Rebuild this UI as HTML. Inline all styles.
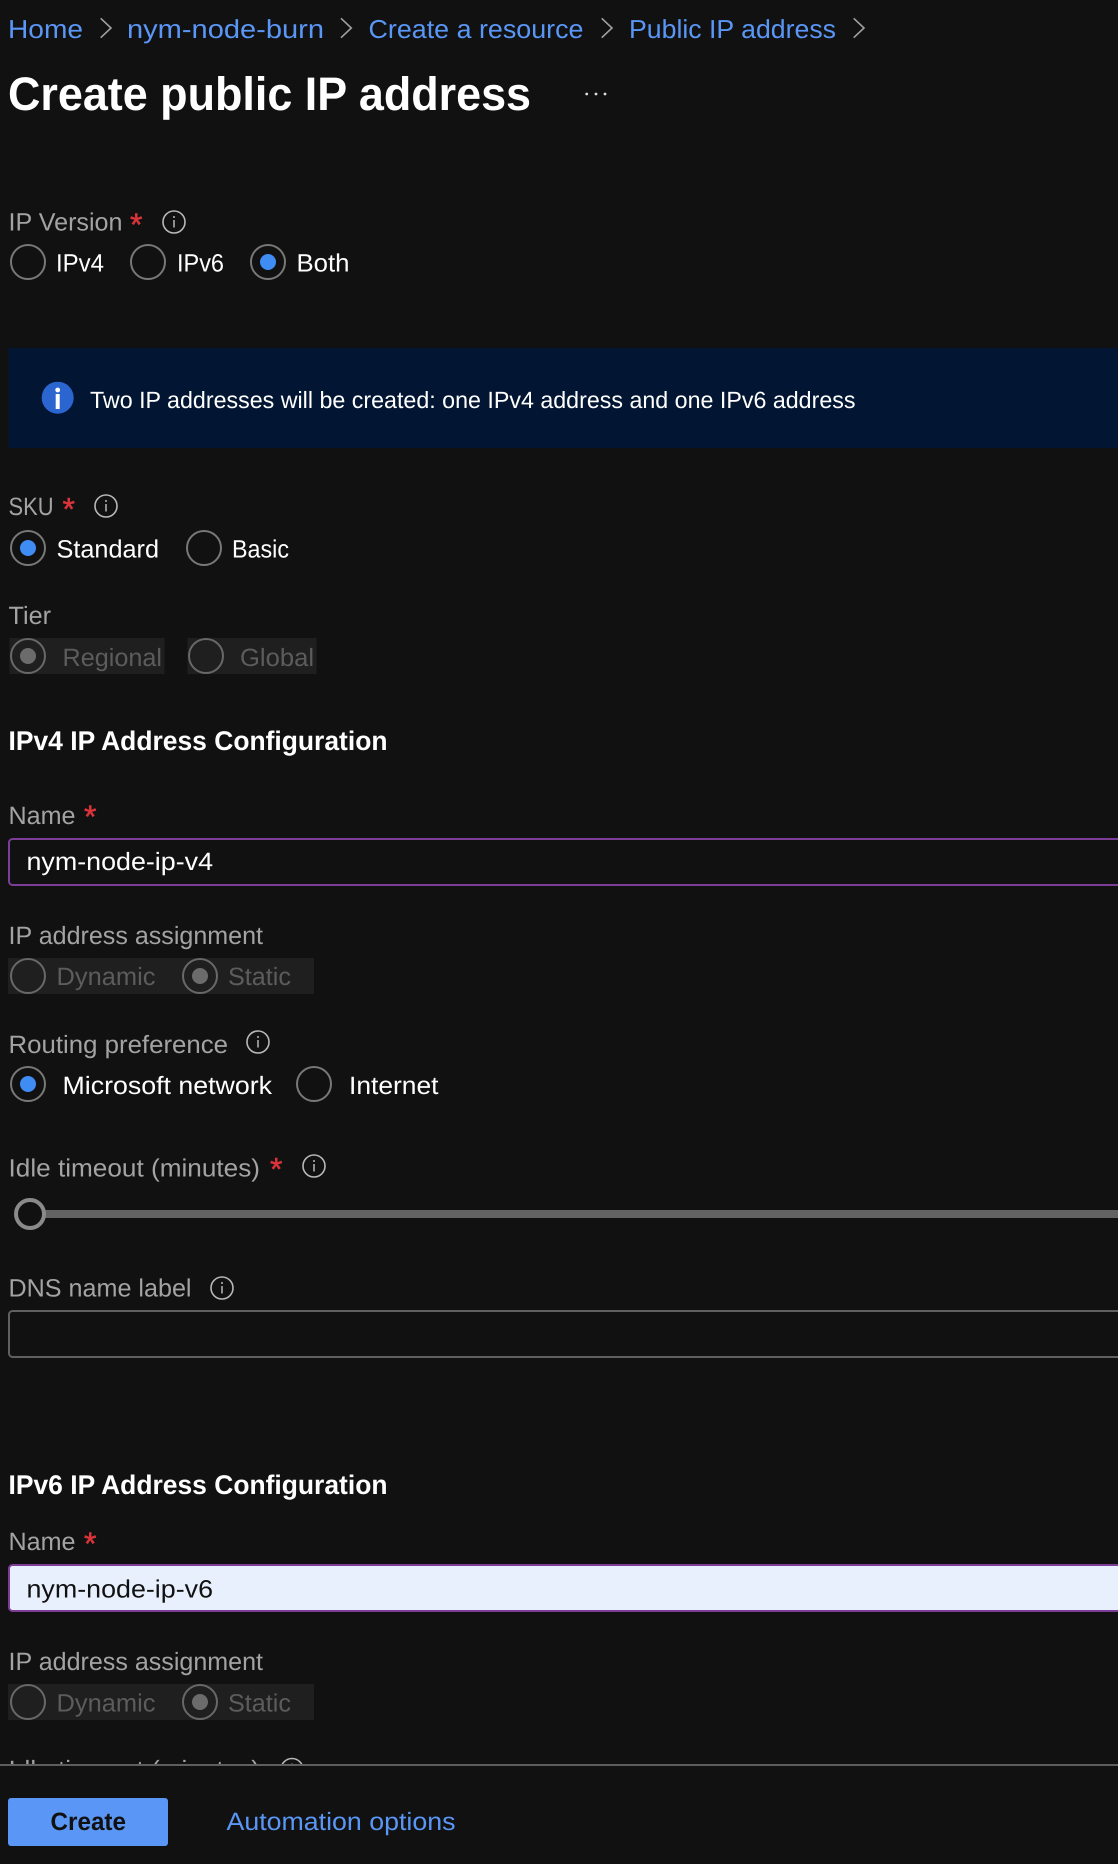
<!DOCTYPE html>
<html lang="en">
<head>
<meta charset="utf-8">
<title>Create public IP address</title>
<style>
html,body{margin:0;padding:0;background:#111111;width:1118px;height:1864px;overflow:hidden}
svg{display:block}
text{font-family:"Liberation Sans",sans-serif;text-rendering:geometricPrecision}
.bc{font-size:26px;fill:#5a96f5}
.lb{font-size:25px;fill:#a3a3a3}
.op{font-size:25px;fill:#ffffff}
.dis{font-size:25px;fill:#5c5c5c}
.h2{font-size:27px;fill:#ffffff;font-weight:700}
.ast{font-size:32px;fill:#d9343a;stroke:#d9343a;stroke-width:.5px}
.inp{font-size:25px}
.rd{fill:none;stroke:#787878;stroke-width:2}
.rdd{fill:none;stroke:#686868;stroke-width:2}
.chev{fill:none;stroke:#a0a0a0;stroke-width:1.6}
.ic{fill:none;stroke:#b8b8b8;stroke-width:1.6}
.icl{stroke:#b8b8b8;stroke-width:1.5}
</style>
</head>
<body>
<svg width="1118" height="1864" viewBox="0 0 1118 1864" xmlns="http://www.w3.org/2000/svg">
<defs>
<g id="info">
<circle class="ic" cx="0" cy="0" r="11"/>
<circle cx="0" cy="-5" r="1" fill="#b8b8b8"/>
<line class="icl" x1="0" y1="-2" x2="0" y2="5.5"/>
</g>
</defs>
<rect width="1118" height="1864" fill="#111111"/>

<!-- Breadcrumb -->
<text class="bc" x="8" y="38" textLength="75" lengthAdjust="spacingAndGlyphs">Home</text>
<path class="chev" d="M100.7 18.3 L111 28 L100.7 37.7"/>
<text class="bc" x="127" y="38" textLength="197" lengthAdjust="spacingAndGlyphs">nym-node-burn</text>
<path class="chev" d="M341 18.3 L351.3 28 L341 37.7"/>
<text class="bc" x="368.5" y="38" textLength="215" lengthAdjust="spacingAndGlyphs">Create a resource</text>
<path class="chev" d="M601.7 18.3 L612 28 L601.7 37.7"/>
<text class="bc" x="629" y="38" textLength="207" lengthAdjust="spacingAndGlyphs">Public IP address</text>
<path class="chev" d="M853.7 18.3 L864 28 L853.7 37.7"/>

<!-- Title -->
<text x="8" y="110" font-size="47" font-weight="700" fill="#ffffff" textLength="523" lengthAdjust="spacingAndGlyphs">Create public IP address</text>
<circle cx="586.7" cy="94" r="1.4" fill="#e0e0e0"/>
<circle cx="596" cy="94" r="1.4" fill="#e0e0e0"/>
<circle cx="605" cy="94" r="1.4" fill="#e0e0e0"/>

<!-- IP Version -->
<text class="lb" x="8.5" y="230.5" textLength="114" lengthAdjust="spacingAndGlyphs">IP Version</text>
<text class="ast" x="130" y="235.5">*</text>
<use href="#info" x="174" y="222"/>
<circle class="rd" cx="28" cy="262" r="17"/>
<text class="op" x="56" y="271.5" textLength="48" lengthAdjust="spacingAndGlyphs">IPv4</text>
<circle class="rd" cx="148" cy="262" r="17"/>
<text class="op" x="177" y="271.5" textLength="47" lengthAdjust="spacingAndGlyphs">IPv6</text>
<circle class="rd" cx="268" cy="262" r="17"/>
<circle cx="268" cy="262" r="8" fill="#3f8cf5"/>
<text class="op" x="296.5" y="271.5" textLength="53" lengthAdjust="spacingAndGlyphs">Both</text>

<!-- Banner -->
<rect x="8.5" y="348" width="1110" height="100" fill="#021633"/>
<circle cx="57.7" cy="397.7" r="16" fill="#2a65d0"/>
<circle cx="57.7" cy="390" r="2.4" fill="#ffffff"/>
<rect x="55.7" y="394" width="4" height="15" fill="#ffffff"/>
<text x="90" y="408" font-size="23.5" fill="#ffffff" textLength="765.5" lengthAdjust="spacingAndGlyphs">Two IP addresses will be created: one IPv4 address and one IPv6 address</text>

<!-- SKU -->
<text class="lb" x="8.5" y="515" textLength="45" lengthAdjust="spacingAndGlyphs">SKU</text>
<text class="ast" x="62.5" y="520">*</text>
<use href="#info" x="106" y="506"/>
<circle class="rd" cx="28" cy="548" r="17"/>
<circle cx="28" cy="548" r="8" fill="#3f8cf5"/>
<text class="op" x="56.5" y="557.5" textLength="102.5" lengthAdjust="spacingAndGlyphs">Standard</text>
<circle class="rd" cx="204" cy="548" r="17"/>
<text class="op" x="232" y="557.5" textLength="57" lengthAdjust="spacingAndGlyphs">Basic</text>

<!-- Tier -->
<text class="lb" x="8.5" y="624" textLength="42.5" lengthAdjust="spacingAndGlyphs">Tier</text>
<rect x="9.5" y="638" width="155" height="36" fill="#1f1f1f"/>
<rect x="187.5" y="638" width="129" height="36" fill="#1f1f1f"/>
<circle class="rdd" cx="28" cy="656" r="17"/>
<circle cx="28" cy="656" r="8" fill="#6b6b6b"/>
<text class="dis" x="62.5" y="666" textLength="99.5" lengthAdjust="spacingAndGlyphs">Regional</text>
<circle class="rdd" cx="206" cy="656" r="17"/>
<text class="dis" x="240" y="666" textLength="74" lengthAdjust="spacingAndGlyphs">Global</text>

<!-- IPv4 config -->
<text class="h2" x="8.5" y="750" textLength="379" lengthAdjust="spacingAndGlyphs">IPv4 IP Address Configuration</text>
<text class="lb" x="8.5" y="824" textLength="67" lengthAdjust="spacingAndGlyphs">Name</text>
<text class="ast" x="84" y="827.5">*</text>
<rect x="9" y="839" width="1120" height="46" rx="3.5" fill="#111111" stroke="#7d3c98" stroke-width="2"/>
<text class="inp" x="26.5" y="870" fill="#ffffff" textLength="186.5" lengthAdjust="spacingAndGlyphs">nym-node-ip-v4</text>

<text class="lb" x="8.5" y="944" textLength="254.5" lengthAdjust="spacingAndGlyphs">IP address assignment</text>
<rect x="8" y="958" width="306" height="36" fill="#1f1f1f"/>
<circle class="rdd" cx="28" cy="976" r="17"/>
<text class="dis" x="56.5" y="985" textLength="99" lengthAdjust="spacingAndGlyphs">Dynamic</text>
<circle class="rdd" cx="200" cy="976" r="17"/>
<circle cx="200" cy="976" r="8" fill="#6b6b6b"/>
<text class="dis" x="228" y="985" textLength="63" lengthAdjust="spacingAndGlyphs">Static</text>

<text class="lb" x="8.5" y="1053" textLength="219.5" lengthAdjust="spacingAndGlyphs">Routing preference</text>
<use href="#info" x="258" y="1042"/>
<circle class="rd" cx="28" cy="1084" r="17"/>
<circle cx="28" cy="1084" r="8" fill="#3f8cf5"/>
<text class="op" x="62.5" y="1094" textLength="209.5" lengthAdjust="spacingAndGlyphs">Microsoft network</text>
<circle class="rd" cx="314" cy="1084" r="17"/>
<text class="op" x="349" y="1094" textLength="89.5" lengthAdjust="spacingAndGlyphs">Internet</text>

<text class="lb" x="8.5" y="1176.5" textLength="251.5" lengthAdjust="spacingAndGlyphs">Idle timeout (minutes)</text>
<text class="ast" x="270" y="1180">*</text>
<use href="#info" x="314" y="1166"/>
<rect x="44" y="1210" width="1074" height="8" fill="#636363"/>
<circle cx="30" cy="1214" r="14" fill="#111111" stroke="#8a8a8a" stroke-width="4"/>

<text class="lb" x="8.5" y="1296.5" textLength="183" lengthAdjust="spacingAndGlyphs">DNS name label</text>
<use href="#info" x="222" y="1288"/>
<rect x="9" y="1311" width="1120" height="46" rx="3.5" fill="#111111" stroke="#606060" stroke-width="2"/>

<!-- IPv6 config -->
<text class="h2" x="8.5" y="1494" textLength="379" lengthAdjust="spacingAndGlyphs">IPv6 IP Address Configuration</text>
<text class="lb" x="8.5" y="1550" textLength="67" lengthAdjust="spacingAndGlyphs">Name</text>
<text class="ast" x="84" y="1554.5">*</text>
<rect x="9" y="1565" width="1120" height="46" rx="3.5" fill="#e8f0fe" stroke="#7d3c98" stroke-width="2"/>
<text class="inp" x="26.5" y="1597.5" fill="#111111" textLength="186.5" lengthAdjust="spacingAndGlyphs">nym-node-ip-v6</text>

<text class="lb" x="8.5" y="1670" textLength="254.5" lengthAdjust="spacingAndGlyphs">IP address assignment</text>
<rect x="8" y="1684" width="306" height="36" fill="#1f1f1f"/>
<circle class="rdd" cx="28" cy="1702" r="17"/>
<text class="dis" x="56.5" y="1711.5" textLength="99" lengthAdjust="spacingAndGlyphs">Dynamic</text>
<circle class="rdd" cx="200" cy="1702" r="17"/>
<circle cx="200" cy="1702" r="8" fill="#6b6b6b"/>
<text class="dis" x="228" y="1711.5" textLength="63" lengthAdjust="spacingAndGlyphs">Static</text>

<!-- Clipped field behind footer -->
<text class="lb" x="8.5" y="1778" textLength="251.5" lengthAdjust="spacingAndGlyphs">Idle timeout (minutes)</text>
<use href="#info" x="292" y="1769.5"/>

<!-- Footer -->
<rect x="0" y="1764" width="1118" height="100" fill="#111111"/>
<rect x="0" y="1764" width="1118" height="2" fill="#5e5e5e"/>
<rect x="8" y="1798" width="160" height="48" rx="3" fill="#5a96f5"/>
<text x="50.5" y="1830" font-size="25" font-weight="700" fill="#111111" textLength="75.5" lengthAdjust="spacingAndGlyphs">Create</text>
<text x="226.5" y="1830" font-size="25" fill="#5a96f5" textLength="229" lengthAdjust="spacingAndGlyphs">Automation options</text>
</svg>
</body>
</html>
